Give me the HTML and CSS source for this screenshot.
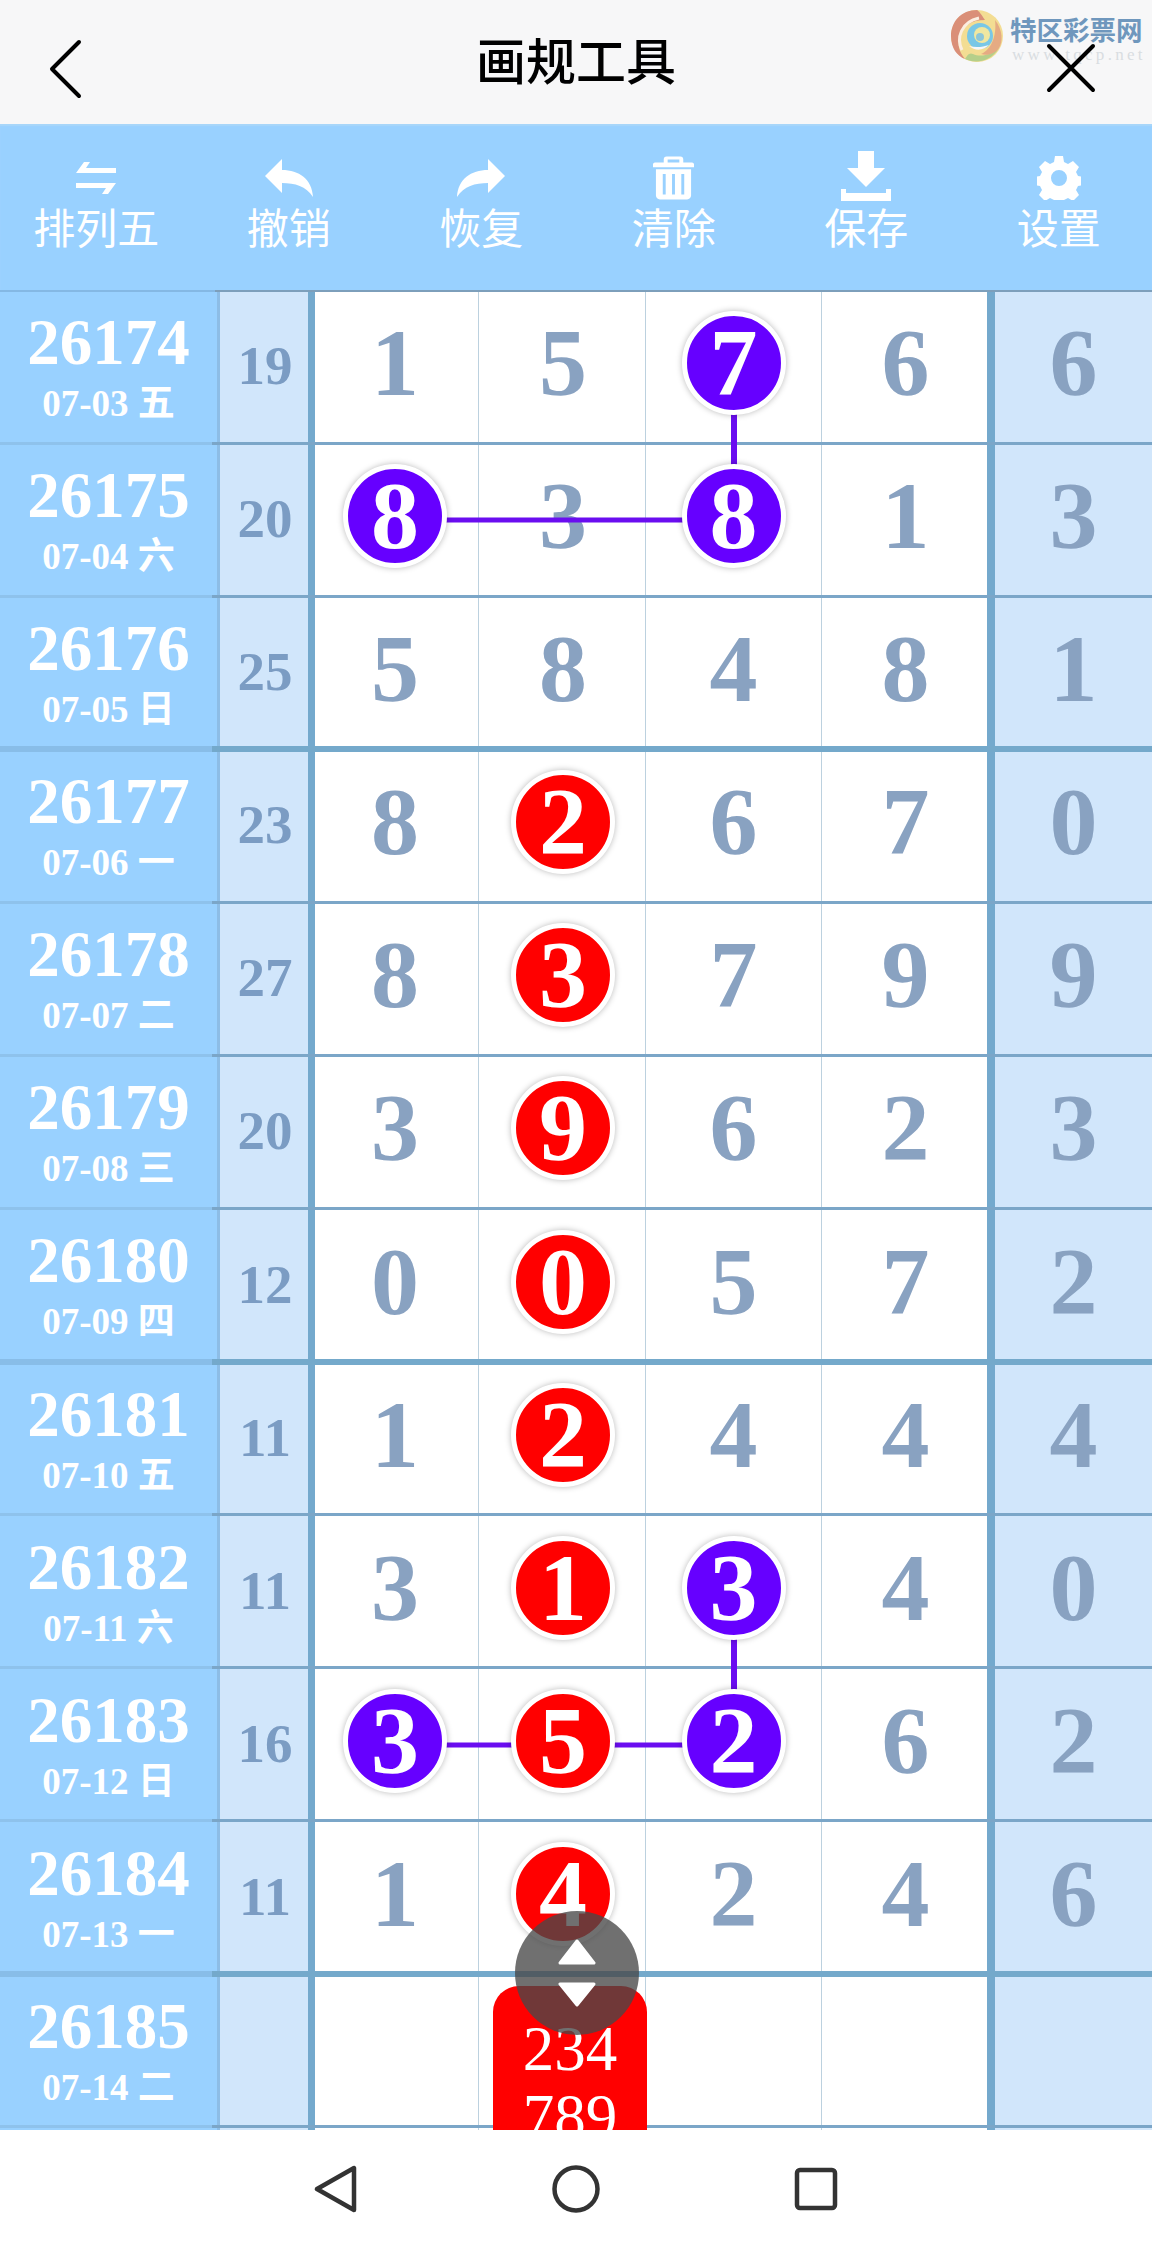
FILE: index.html
```html
<!DOCTYPE html>
<html lang="zh">
<head>
<meta charset="utf-8">
<title>画规工具</title>
<link rel="stylesheet" href="styles.css">
</head>
<body>
<div class="page">
  <header class="header">
    <svg class="back" viewBox="0 0 34 60"><path d="M31 3 4 30l27 27"/></svg>
    <h1 class="title">画规工具</h1>
    <svg class="close" viewBox="0 0 50 50"><path d="M3 3l44 44M47 3 3 47"/></svg>
    <div class="logo">
      <svg class="swirl" viewBox="0 0 52 52">
        <circle cx="26" cy="26" r="26" fill="#f3dd93"/>
        <path d="M26 0C10 0 0 12 0 26c0 12 6 20 14 23-6-7-8-15-5-23 3-10 11-16 25-16-4-6-6-9-8-10z" fill="#da8f78"/>
        <path d="M14 49c10 5 26 3 34-11-6 6-18 10-26 6-4-2-6 2-8 5z" fill="#b5cf8a"/>
        <path d="M44 10c8 10 8 22 4 28-4 6-12 8-18 6 10-4 16-18 14-34z" fill="#e5ab83"/>
        <path d="M11 40C5 28 10 12 28 8" fill="none" stroke="#fbeee0" stroke-width="3"/>
        <circle cx="29" cy="26" r="13" fill="#79c7e6"/>
        <path d="M38 35c-6 6-14 6-20 1 7 2 14 1 20-1z" fill="#f7f7f8"/>
        <circle cx="31" cy="25" r="8" fill="#f0e7a0"/>
        <circle cx="29" cy="27" r="4" fill="#8dc6d8"/>
      </svg>
      <div class="logo-text">
        <span class="logo-name">特区彩票网</span>
        <span class="logo-url">www.tqcp.net</span>
      </div>
    </div>
  </header>

  <nav class="toolbar">
    <div class="tool">
      <div class="tool-icon"><svg class="i-swap" viewBox="0 0 40 32"><path d="M0 11 8 0h6l-4 6h30v5zM40 21l-8 11h-6l4-6H0v-5z"/></svg></div>
      <span>排列五</span>
    </div>
    <div class="tool">
      <div class="tool-icon"><svg class="i-arrow" viewBox="0 0 48 38"><path d="M0 17 17 0v11c17 0 30 9 31 27-7-11-18-14-31-14v10z"/></svg></div>
      <span>撤销</span>
    </div>
    <div class="tool">
      <div class="tool-icon"><svg class="i-arrow" viewBox="0 0 48 38"><path d="M48 17 31 0v11C14 11 1 20 0 38c7-11 18-14 31-14v10z"/></svg></div>
      <span>恢复</span>
    </div>
    <div class="tool">
      <div class="tool-icon"><svg class="i-trash" viewBox="0 0 42 44"><path fill-rule="evenodd" d="M14 0h14c2 0 3 1 3 3v3h9c1 0 2 1 2 2v3H0V8c0-1 1-2 2-2h9V3c0-2 1-3 3-3zm1 3v3h12V3zM3 13h36v27c0 2-2 4-4 4H7c-2 0-4-2-4-4zm7 5v21h3V18zm9.500 0v21h3V18zM29 18v21h3V18z"/></svg></div>
      <span>清除</span>
    </div>
    <div class="tool">
      <div class="tool-icon"><svg class="i-save" viewBox="0 0 50 50"><path d="M17 0h16v17h11L25 36 6 17h11zM0 38h5v4h40v-4h5v12H0z"/></svg></div>
      <span>保存</span>
    </div>
    <div class="tool">
      <div class="tool-icon"><svg class="i-gear" viewBox="0 0 44 44"><path fill-rule="evenodd" d="M18 0h8l1 6 4 2 5-3 6 6-3 5 2 4 6 1v8l-6 1-2 4 3 5-6 6-5-3-4 2-1 6h-8l-1-6-4-2-5 3-6-6 3-5-2-4-6-1v-8l6-1 2-4-3-5 6-6 5 3 4-2zm4 14a8 8 0 1 0 0 16 8 8 0 0 0 0-16z"/></svg></div>
      <span>设置</span>
    </div>
  </nav>

  <main class="board">
    <svg class="links" viewBox="0 0 1152 1840">
      <path class="h" d="M395 230H734M395 1455H734"/>
      <path class="v" d="M734 76V230M734 1301V1454"/>
    </svg>

    <div class="row">
      <div class="issue"><b>26174</b><small>07-03 五</small></div><div class="sum">19</div>
      <div class="cell">1</div><div class="cell">5</div><div class="cell"><i class="ball violet">7</i></div><div class="cell">6</div><div class="cell tail">6</div>
    </div>
    <div class="row">
      <div class="issue"><b>26175</b><small>07-04 六</small></div><div class="sum">20</div>
      <div class="cell"><i class="ball violet">8</i></div><div class="cell">3</div><div class="cell"><i class="ball violet">8</i></div><div class="cell">1</div><div class="cell tail">3</div>
    </div>
    <div class="row thick">
      <div class="issue"><b>26176</b><small>07-05 日</small></div><div class="sum">25</div>
      <div class="cell">5</div><div class="cell">8</div><div class="cell">4</div><div class="cell">8</div><div class="cell tail">1</div>
    </div>
    <div class="row">
      <div class="issue"><b>26177</b><small>07-06 一</small></div><div class="sum">23</div>
      <div class="cell">8</div><div class="cell"><i class="ball red">2</i></div><div class="cell">6</div><div class="cell">7</div><div class="cell tail">0</div>
    </div>
    <div class="row">
      <div class="issue"><b>26178</b><small>07-07 二</small></div><div class="sum">27</div>
      <div class="cell">8</div><div class="cell"><i class="ball red">3</i></div><div class="cell">7</div><div class="cell">9</div><div class="cell tail">9</div>
    </div>
    <div class="row">
      <div class="issue"><b>26179</b><small>07-08 三</small></div><div class="sum">20</div>
      <div class="cell">3</div><div class="cell"><i class="ball red">9</i></div><div class="cell">6</div><div class="cell">2</div><div class="cell tail">3</div>
    </div>
    <div class="row thick">
      <div class="issue"><b>26180</b><small>07-09 四</small></div><div class="sum">12</div>
      <div class="cell">0</div><div class="cell"><i class="ball red">0</i></div><div class="cell">5</div><div class="cell">7</div><div class="cell tail">2</div>
    </div>
    <div class="row">
      <div class="issue"><b>26181</b><small>07-10 五</small></div><div class="sum">11</div>
      <div class="cell">1</div><div class="cell"><i class="ball red">2</i></div><div class="cell">4</div><div class="cell">4</div><div class="cell tail">4</div>
    </div>
    <div class="row">
      <div class="issue"><b>26182</b><small>07-11 六</small></div><div class="sum">11</div>
      <div class="cell">3</div><div class="cell"><i class="ball red">1</i></div><div class="cell"><i class="ball violet">3</i></div><div class="cell">4</div><div class="cell tail">0</div>
    </div>
    <div class="row">
      <div class="issue"><b>26183</b><small>07-12 日</small></div><div class="sum">16</div>
      <div class="cell"><i class="ball violet">3</i></div><div class="cell"><i class="ball red">5</i></div><div class="cell"><i class="ball violet">2</i></div><div class="cell">6</div><div class="cell tail">2</div>
    </div>
    <div class="row thick">
      <div class="issue"><b>26184</b><small>07-13 一</small></div><div class="sum">11</div>
      <div class="cell">1</div><div class="cell"><i class="ball red">4</i></div><div class="cell">2</div><div class="cell">4</div><div class="cell tail">6</div>
    </div>
    <div class="row last">
      <div class="issue"><b>26185</b><small>07-14 二</small></div><div class="sum"></div>
      <div class="cell"></div>
      <div class="cell pick-cell"><div class="pick">234<br>789</div></div>
      <div class="cell"></div><div class="cell"></div><div class="cell tail"></div>
    </div>
  </main>

  <div class="drag">
    <svg class="drag-arrows" viewBox="0 0 38 68"><path d="M19 2 36 24H2zM2 45h34L19 66z"/></svg>
  </div>

  <footer class="navbar">
    <svg class="nav-back" viewBox="0 0 44 48"><path d="M40 3v42L3 24z"/></svg>
    <svg class="nav-home" viewBox="0 0 48 48"><circle cx="24" cy="24" r="21.500"/></svg>
    <svg class="nav-recent" viewBox="0 0 44 44"><rect x="3" y="3" width="38" height="38" rx="3"/></svg>
  </footer>
</div>
</body>
</html>
```
FILE: styles.css
```css
* { box-sizing: border-box; }
html, body { margin: 0; padding: 0; background: #fff; }
.page {
  width: 1152px;
  height: 2248px;
  position: relative;
  overflow: hidden;
  font-family: "Liberation Serif", "Noto Sans CJK SC", serif;
}

/* Header */
.header {
  height: 124px;
  background: #f7f7f8;
  display: grid;
  grid-template-columns: 1fr auto 1fr;
  align-items: center;
  position: relative;
}
.title {
  margin: 0;
  font: 500 50px/60px "Noto Sans CJK SC", sans-serif;
  color: #000;
  position: relative;
  top: -4px;
}
.back { width: 34px; height: 60px; margin-left: 48px; justify-self: start; position: relative; top: 7px; }
.back path, .close path { fill: none; stroke: #000; stroke-width: 4; stroke-linecap: round; stroke-linejoin: round; }
.close { width: 50px; height: 50px; margin-right: 56px; justify-self: end; position: relative; top: 6px; z-index: 2; }
.logo {
  position: absolute;
  left: 951px;
  top: 10px;
  display: flex;
  gap: 7px;
  align-items: flex-start;
}
.swirl { width: 52px; height: 52px; }
.logo-text { display: flex; flex-direction: column; }
.logo-name {
  font: 700 26.500px/30px "Noto Sans CJK SC", sans-serif;
  color: #6f97bd;
  margin-top: 4px;
  white-space: nowrap;
}
.logo-url {
  font: 400 17px/16px "Liberation Serif", serif;
  letter-spacing: 3.300px;
  color: #d9dde1;
  margin-top: 3px;
  margin-left: 2px;
  white-space: nowrap;
}

/* Toolbar */
.toolbar {
  height: 166px;
  background: #99d1ff;
  display: grid;
  grid-template-columns: repeat(6, 192.500px);
  padding-top: 26px;
  color: #fff;
  font: 400 42px/50px "Noto Sans CJK SC", sans-serif;
  text-align: center;
  box-shadow: inset 0 2px 1px #a8d6fa;
}
.tool { display: flex; flex-direction: column; align-items: center; }
.tool-icon { height: 51px; display: flex; align-items: center; justify-content: center; }
.tool-icon svg { fill: #fff; display: block; }
.i-swap { width: 40px; height: 32px; margin-top: 4px; }
.i-arrow { width: 48px; height: 38px; margin-top: 4px; }
.i-trash { width: 41px; height: 44px; margin-top: 4px; }
.i-save { width: 50px; height: 50px; }
.i-gear { width: 44px; height: 44px; margin-top: 4px; }

/* Board */
.board { height: 1840px; position: relative; overflow: hidden; background: #fff; }
.board::before {
  content: "";
  position: absolute;
  left: 0; right: 0; top: -1px;
  height: 3px;
  z-index: 1;
  background: linear-gradient(to right, #84b8e4 0, #84b8e4 215px, #7d9fbb 215px);
}
.links { position: absolute; left: 0; top: 0; width: 1152px; height: 1840px; z-index: 2; pointer-events: none; }
.links path { fill: none; stroke: #6a0df0; }
.links .h { stroke-width: 5; }
.links .v { stroke-width: 6; }
.row {
  height: 153.090px;
  display: grid;
  grid-template-columns: 220px 95px 164px 167px 176px 173px 157px;
  position: relative;
}
.row::after {
  content: "";
  position: absolute;
  left: 0; right: 0; bottom: -1.500px;
  height: 3px;
  z-index: 1;
  background: linear-gradient(to right, #8ec2ec 0, #8ec2ec 212px, #7ba6c8 212px);
}
.row.thick::after {
  height: 6px;
  bottom: -3px;
  background: linear-gradient(to right, #88bde8 0, #88bde8 212px, #74a9cb 212px);
}
.row.last { height: 156px; }
.row.last::after { bottom: 2px; }

.issue {
  background: #99d1ff;
  border-right: 3px solid #8dbde6;
  color: #fff;
  display: flex;
  flex-direction: column;
  align-items: center;
  padding-top: 19px;
}
.issue b { font: 700 65px/66px "Liberation Serif", serif; }
.issue small { font: 700 37px/44px "Liberation Serif", "Noto Sans CJK SC", serif; margin-top: 7px; white-space: nowrap; }
.sum {
  background: #d1e6fb;
  border-right: 7px solid #74a9cd;
  color: #7b9cc3;
  font: 700 55px/1 "Liberation Serif", serif;
  display: flex;
  align-items: center;
  justify-content: center;
  padding-bottom: 2px;
  padding-left: 2px;
}
.cell {
  border-right: 1.500px solid #bcd1df;
  color: #89a2c1;
  font: 700 96px/1 "Liberation Serif", serif;
  display: flex;
  align-items: center;
  justify-content: center;
  padding-bottom: 7px;
}
.cell:nth-child(3) { padding-right: 3px; }
.cell:nth-child(4) { padding-left: 2px; }
.cell:nth-child(6) { border-right: 8px solid #74a9cd; padding-left: 2px; }
.cell.tail { background: #d1e6fb; border-right: 0; }

.ball {
  width: 104px;
  height: 104px;
  border-radius: 50%;
  border: 5.500px solid #fff;
  box-shadow: 0 0 6px rgba(0, 0, 0, .28);
  color: #fff;
  font: 700 96px/93px "Liberation Serif", serif;
  text-align: center;
  position: relative;
  z-index: 3;
  display: block;
}
.ball.violet { background: #6600ff; }
.ball.red { background: #ff0000; }

.pick-cell { align-items: flex-start; padding: 0; position: relative; }
.pick {
  position: absolute;
  left: 14px;
  top: 12px;
  width: 154px;
  height: 160px;
  border-radius: 26px 26px 0 0;
  background: #ff0000;
  color: #fff;
  font: 400 63px/68px "Liberation Serif", serif;
  text-align: center;
  padding: 29px 0 0 0;
  z-index: 2;
}

/* Floating drag handle */
.drag {
  position: absolute;
  left: 515px;
  top: 1911px;
  width: 124px;
  height: 124px;
  border-radius: 50%;
  background: rgba(72, 72, 72, .78);
  z-index: 5;
  display: flex;
  align-items: center;
  justify-content: center;
}
.drag-arrows { width: 38px; height: 68px; }
.drag-arrows path { fill: #fff; stroke: #fff; stroke-width: 3; stroke-linejoin: round; }

/* Nav bar */
.navbar {
  height: 118px;
  background: #fff;
  position: relative;
  z-index: 4;
  display: grid;
  grid-template-columns: repeat(3, 240px);
  justify-content: center;
  justify-items: center;
  align-items: center;
}
.navbar svg { display: block; fill: none; stroke: #333; stroke-width: 4.500; stroke-linejoin: round; }
.nav-back { width: 44px; height: 48px; }
.nav-home { width: 48px; height: 48px; }
.nav-recent { width: 44px; height: 44px; }
```
